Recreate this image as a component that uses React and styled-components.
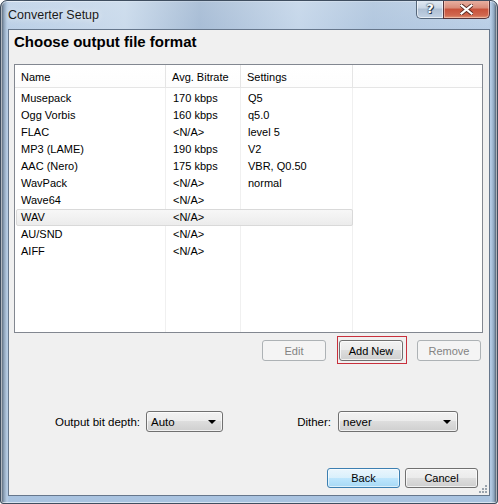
import React from "react";
import styled, { createGlobalStyle } from "styled-components";

const formats = [
  { name: "Musepack", rate: "170 kbps", settings: "Q5" },
  { name: "Ogg Vorbis", rate: "160 kbps", settings: "q5.0" },
  { name: "FLAC", rate: "<N/A>", settings: "level 5" },
  { name: "MP3 (LAME)", rate: "190 kbps", settings: "V2" },
  { name: "AAC (Nero)", rate: "175 kbps", settings: "VBR, Q0.50" },
  { name: "WavPack", rate: "<N/A>", settings: "normal" },
  { name: "Wave64", rate: "<N/A>", settings: "" },
  { name: "WAV", rate: "<N/A>", settings: "", selected: true },
  { name: "AU/SND", rate: "<N/A>", settings: "" },
  { name: "AIFF", rate: "<N/A>", settings: "" },
];

const App = () => {
  return (
    <>
      <GlobalStyle />
      <Window>
        <TitleBar>
          <Caption>Converter Setup</Caption>
          <CaptionButtons>
            <HelpButton>?</HelpButton>
            <CloseButton>
              <svg width="13" height="11" viewBox="0 0 13 11">
                <path
                  d="M1.5 1.5 L11.5 9.5 M11.5 1.5 L1.5 9.5"
                  stroke="#5a2a22"
                  strokeWidth="4"
                  strokeLinecap="square"
                />
                <path
                  d="M1.5 1.5 L11.5 9.5 M11.5 1.5 L1.5 9.5"
                  stroke="#fff"
                  strokeWidth="2.2"
                  strokeLinecap="square"
                />
              </svg>
            </CloseButton>
          </CaptionButtons>
        </TitleBar>

        <Client>
          <Heading>Choose output file format</Heading>

          <ListView>
            <HeaderRow>
              <HeaderCell>Name</HeaderCell>
              <HeaderCell>Avg. Bitrate</HeaderCell>
              <HeaderCell>Settings</HeaderCell>
              <HeaderCell />
            </HeaderRow>
            <ListBody>
              {formats.map((f) => (
                <Row key={f.name} selected={f.selected}>
                  <Cell>{f.name}</Cell>
                  <Cell>{f.rate}</Cell>
                  <Cell>{f.settings}</Cell>
                </Row>
              ))}
            </ListBody>
          </ListView>

          <ButtonRow>
            <Button disabled>Edit</Button>
            <Highlight>
              <Button>Add New</Button>
            </Highlight>
            <Button disabled>Remove</Button>
          </ButtonRow>

          <OptionsRow>
            <Label>Output bit depth:</Label>
            <Combo>
              <span>Auto</span>
              <Arrow />
            </Combo>
            <Label>Dither:</Label>
            <Combo>
              <span>never</span>
              <Arrow />
            </Combo>
          </OptionsRow>

          <FooterRow>
            <Button isDefault wide>
              Back
            </Button>
            <Button wide>Cancel</Button>
          </FooterRow>

          <SizeGrip />
        </Client>
      </Window>
    </>
  );
};

export default App;

const GlobalStyle = createGlobalStyle`
  html, body {
    margin: 0;
    padding: 0;
    background: #ffffff;
  }
  body {
    font-family: "Liberation Sans", Arial, sans-serif;
    font-size: 11px;
    color: #000;
  }
  * {
    box-sizing: border-box;
  }
`;

const Window = styled.div`
  width: 498px;
  height: 504px;
  border: 1px solid #3f4e60;
  border-radius: 7px 7px 3px 3px;
  padding: 0 7px 7px 7px;
  display: flex;
  flex-direction: column;
  background:
    linear-gradient(to right, #4a5664 0px, #8ea3ba 3px, #b8cde4 6px, rgba(184, 205, 228, 0) 8px),
    linear-gradient(to left, #3c4552 0px, #8ea6bf 3px, #b4cbe4 6px, rgba(180, 203, 228, 0) 8px),
    linear-gradient(to bottom, #c6d7ea 0px, #b9cee6 30px, #a9c3e0 100%);
  box-shadow: inset 0 0 0 1px rgba(255, 255, 255, 0.55);
  overflow: hidden;
`;

const TitleBar = styled.div`
  height: 28px;
  display: flex;
  align-items: flex-start;
  justify-content: space-between;
  margin: 0 -7px;
  padding: 0 7px;
  background:
    linear-gradient(
      to right,
      rgba(255, 255, 255, 0) 0%,
      rgba(210, 224, 238, 0.7) 25%,
      rgba(150, 172, 198, 0.5) 40%,
      rgba(205, 220, 236, 0.6) 60%,
      rgba(170, 192, 216, 0.5) 75%,
      rgba(255, 255, 255, 0) 100%
    );
`;

const Caption = styled.div`
  font-family: "Liberation Sans", Arial, sans-serif;
  font-size: 12.5px;
  color: #1a1a1a;
  line-height: 28px;
  text-shadow: 0 0 6px rgba(255, 255, 255, 0.9);
`;

const CaptionButtons = styled.div`
  display: flex;
  margin-top: -1px;
`;

const HelpButton = styled.div`
  width: 27px;
  height: 19px;
  border: 1px solid #55667a;
  border-top: none;
  border-right: none;
  border-radius: 0 0 0 5px;
  background: linear-gradient(to bottom, #e4ecf5 0%, #c9d6e5 45%, #aebfd3 50%, #c2d2e4 100%);
  box-shadow: inset 0 0 0 1px rgba(255, 255, 255, 0.6);
  color: #fff;
  font-family: "DejaVu Sans", sans-serif;
  font-weight: bold;
  font-size: 13px;
  line-height: 18px;
  text-align: center;
  text-shadow: 0 0 1px #2c3a4a, 0 0 2px #2c3a4a, 1px 1px 0 #2c3a4a;
`;

const CloseButton = styled.div`
  width: 47px;
  height: 19px;
  border: 1px solid #55343a;
  border-top: none;
  border-radius: 0 0 5px 0;
  background: linear-gradient(to bottom, #eab4a6 0%, #d98b78 45%, #c8513a 50%, #d0674f 85%, #e09a78 100%);
  box-shadow: inset 0 0 0 1px rgba(255, 220, 210, 0.5);
  display: flex;
  align-items: center;
  justify-content: center;
`;

const Client = styled.div`
  position: relative;
  flex: 1;
  display: flex;
  flex-direction: column;
  background: #f0f0f0;
  border: 1px solid #66778c;
`;

const Heading = styled.div`
  margin: 3px 0 0 5px;
  font-family: "Liberation Sans", Arial, sans-serif;
  font-weight: bold;
  font-size: 15px;
  line-height: 18px;
  color: #000;
`;

const ListView = styled.div`
  margin: 13px 6px 0 5px;
  height: 269px;
  border: 1px solid #828790;
  background: #fff;
  display: flex;
  flex-direction: column;
`;

const HeaderRow = styled.div`
  display: grid;
  grid-template-columns: 151px 75px 112px 1fr;
  height: 23px;
  border-bottom: 1px solid #e5e5e5;
  background: linear-gradient(to bottom, #ffffff, #fdfdfd);
`;

const HeaderCell = styled.div`
  padding: 2px 0 0 6px;
  line-height: 21px;
  border-right: 1px solid #e5e5e5;
  white-space: nowrap;
  &:last-child {
    border-right: none;
  }
`;

const ListBody = styled.div`
  flex: 1;
  padding-top: 2px;
  background:
    linear-gradient(to right, transparent 150px, #f0f0f0 150px, #f0f0f0 151px, transparent 151px),
    linear-gradient(to right, transparent 225px, #f0f0f0 225px, #f0f0f0 226px, transparent 226px),
    linear-gradient(to right, transparent 337px, #f0f0f0 337px, #f0f0f0 338px, transparent 338px);
`;

const Row = styled.div`
  display: grid;
  grid-template-columns: 151px 75px 111px;
  width: 337px;
  margin-left: 1px;
  height: 17px;
  border: 1px solid ${(p) => (p.selected ? "#d9d9d9" : "transparent")};
  border-radius: 2px;
  background: ${(p) =>
    p.selected ? "linear-gradient(to bottom, #f7f7f7, #ececec)" : "transparent"};
`;

const Cell = styled.div`
  padding-left: 5px;
  line-height: 15px;
  white-space: nowrap;
  &:first-child {
    padding-left: 4px;
  }
`;

const ButtonRow = styled.div`
  display: flex;
  justify-content: flex-end;
  align-items: center;
  margin-top: 7px;
  padding-right: 8px;
  height: 21px;

  & > :first-child {
    margin-right: 11px;
  }
  & > :last-child {
    margin-left: 10px;
  }
`;

const Highlight = styled.div`
  padding: 3px 3px 2px 1px;
  margin: -4px 0 -3px 0;
  border: 1px solid #c8303c;
`;

const Button = styled.button`
  display: block;
  width: ${(p) => (p.wide ? "73px" : "64px")};
  height: ${(p) => (p.wide ? "20px" : "21px")};
  padding: 0;
  font-family: "Liberation Sans", Arial, sans-serif;
  font-size: 11px;
  color: #000;
  border: 1px solid ${(p) => (p.isDefault ? "#3c7fb1" : "#707070")};
  border-radius: 3px;
  background: ${(p) =>
    p.isDefault
      ? "linear-gradient(to bottom, #eaf6fd 0%, #d9f0fc 49%, #bee6fd 50%, #a7d9f5 100%)"
      : "linear-gradient(to bottom, #f2f2f2 0%, #ebebeb 49%, #dddddd 50%, #cfcfcf 100%)"};
  box-shadow: inset 0 0 0 1px
    ${(p) => (p.isDefault ? "rgba(255,255,255,0.6)" : "rgba(255,255,255,0.7)")};

  &:disabled {
    border-color: #adb2b5;
    background: #f4f4f4;
    color: #838383;
    box-shadow: none;
  }
`;

const OptionsRow = styled.div`
  display: grid;
  grid-template-columns: 91px 77px 115px 120px;
  align-items: center;
  margin-top: 50px;
  padding-left: 46px;
  height: 21px;
`;

const Label = styled.div`
  text-align: right;
  padding-right: 7px;
  white-space: nowrap;
  font-size: 11.5px;
`;

const Combo = styled.div`
  height: 21px;
  display: flex;
  align-items: center;
  justify-content: space-between;
  padding: 1px 5px 0 4px;
  border: 1px solid #707070;
  border-radius: 3px;
  background: linear-gradient(to bottom, #f2f2f2 0%, #ebebeb 49%, #dddddd 50%, #cfcfcf 100%);
  box-shadow: inset 0 0 0 1px rgba(255, 255, 255, 0.7);
  font-size: 11.5px;
`;

const Arrow = styled.span`
  width: 0;
  height: 0;
  border-left: 4px solid transparent;
  border-right: 4px solid transparent;
  border-top: 4px solid #000;
  margin-right: 1px;
`;

const FooterRow = styled.div`
  display: flex;
  justify-content: flex-end;
  gap: 5px;
  margin-top: 36px;
  padding-right: 11px;
`;

const SizeGrip = styled.div`
  position: absolute;
  right: 1px;
  bottom: 1px;
  width: 9px;
  height: 9px;
  background:
    radial-gradient(circle at 7px 7px, #9aa4ae 1px, transparent 1.2px),
    radial-gradient(circle at 4px 7px, #9aa4ae 1px, transparent 1.2px),
    radial-gradient(circle at 7px 4px, #9aa4ae 1px, transparent 1.2px),
    radial-gradient(circle at 1px 7px, #9aa4ae 1px, transparent 1.2px),
    radial-gradient(circle at 4px 4px, #9aa4ae 1px, transparent 1.2px),
    radial-gradient(circle at 7px 1px, #9aa4ae 1px, transparent 1.2px);
`;
